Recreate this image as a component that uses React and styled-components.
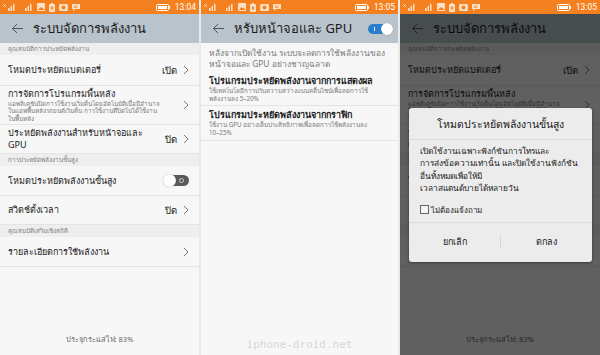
import React from 'react'
import styled, { createGlobalStyle } from 'styled-components'

const Global = createGlobalStyle`
  html, body { margin: 0; padding: 0; background: #e9e9e9; }
  body { font-family: "Noto Sans", "Liberation Sans", sans-serif; }
`;

const Screen = styled.div`
  display: flex;
  gap: 2px;
  width: 600px;
  height: 355px;
  overflow: hidden;
`;

const Phone = styled.div`
  position: relative;
  flex: 0 0 ${p => p.w}px;
  display: flex;
  flex-direction: column;
  background: #f7f7f7;
  overflow: hidden;
`;

const StatusBar = styled.div`
  position: relative;
  z-index: 3;
  height: 14px;
  flex: 0 0 14px;
  background: #f5801f;
  display: flex;
  align-items: center;
  padding: 0 3px 0 3px;
  color: #fff;
  font-size: 8.5px;
`;

const StatusIcons = styled.div`
  display: flex;
  align-items: center;
  gap: 4px;
  flex: 1;
`;

const Time = styled.span`
  margin-left: 5px;
  font-family: "Roboto", sans-serif;
`;

const Header = styled.div`
  height: 29px;
  flex: 0 0 29px;
  background: #b8c3cb;
  display: flex;
  align-items: center;
  padding: 0 6px 0 11px;
  gap: 9px;
`;

const HeaderTitle = styled.div`
  flex: 1;
  font-size: 13px;
  color: #1c1c1c;
  white-space: nowrap;
  overflow: hidden;
`;

const Section = styled.div`
  background: #eeeeee;
  color: #808080;
  font-size: 6.3px;
  height: 12px;
  flex: 0 0 12px;
  padding: 0 8px;
  line-height: 12px;
  white-space: nowrap;
`;

const Row = styled.div`
  display: flex;
  align-items: center;
  height: ${p => p.h || 29}px;
  flex: 0 0 ${p => p.h || 29}px;
  box-sizing: border-box;
  padding: 0 10px 0 8px;
  border-bottom: 1px solid #e4e4e4;
  background: #f7f7f7;
  gap: 6px;
`;

const RowText = styled.div`
  flex: 1;
  min-width: 0;
`;

const RowTitle = styled.div`
  font-size: ${p => p.size || 9}px;
  line-height: ${p => (p.size || 9) + 3}px;
  color: #1a1a1a;
  font-weight: ${p => p.bold ? 600 : 400};
  white-space: nowrap;
`;

const RowSub = styled.div`
  font-size: 6.3px;
  line-height: 7.6px;
  color: #7a7a7a;
  white-space: nowrap;
`;

const Value = styled.span`
  font-size: 9.5px;
  color: #222;
`;

const Spacer = styled.div`
  flex: 1;
`;

const Footer = styled.div`
  text-align: center;
  font-size: 7.5px;
  color: #666;
  padding-bottom: 10px;
`;

const Watermark = styled.div`
  text-align: center;
  font-family: "DejaVu Sans Mono", monospace;
  font-size: 11px;
  color: #d6d6d6;
  padding-bottom: 4px;
`;

const Intro = styled.div`
  font-size: 8.4px;
  line-height: 11px;
  color: #777;
  padding: 4px 8px 3px;
  white-space: nowrap;
`;

const Toggle = styled.div`
  width: ${p => p.w || 25}px;
  height: ${p => p.hh || 11}px;
  border-radius: 8px;
  background: ${p => p.on ? '#2a7ccc' : '#5a5a5a'};
  position: relative;
  flex: 0 0 auto;
  &::after {
    content: '';
    position: absolute;
    top: -1px;
    ${p => p.on ? 'right: -1px;' : 'left: -1px;'}
    width: ${p => (p.hh || 11) + 2}px;
    height: ${p => (p.hh || 11) + 2}px;
    border-radius: 50%;
    background: #fff;
    box-shadow: 0 0 1px rgba(0,0,0,.4);
  }
  &::before {
    content: '';
    position: absolute;
    top: 50%;
    ${p => p.on ? 'left: 6px; width: 1px; height: 4px; margin-top: -2px; background: #fff;' : 'right: 5px; width: 3px; height: 3px; margin-top: -2.5px; border: 1px solid #ccc; border-radius: 50%;'}
  }
`;

const Overlay = styled.div`
  position: absolute;
  z-index: 2;
  top: 14px;
  left: 0;
  right: 0;
  bottom: 0;
  background: rgba(0, 0, 0, 0.61);
`;

const Dialog = styled.div`
  position: absolute;
  z-index: 4;
  top: 108px;
  left: 9px;
  width: 183px;
  height: 154px;
  background: #ececec;
  border-radius: 3px;
  box-shadow: 0 1px 3px rgba(0,0,0,.4);
  display: flex;
  flex-direction: column;
`;

const DialogTitle = styled.div`
  text-align: center;
  font-size: 10.5px;
  line-height: 14px;
  color: #1a1a1a;
  padding: 9px 0 8px;
  border-bottom: 1px solid #dcdcdc;
`;

const DialogBody = styled.div`
  padding: 5px 6px 0 11px;
  font-size: 8.3px;
  line-height: 12.4px;
  color: #1a1a1a;
  white-space: nowrap;
`;

const CheckLine = styled.label`
  display: flex;
  align-items: center;
  gap: 2px;
  font-size: 8px;
  line-height: 11px;
  color: #222;
  padding: 9px 0 7px 11px;
  border-bottom: 1px solid #dcdcdc;
`;

const CheckBox = styled.span`
  width: 7px;
  height: 7px;
  border: 1px solid #666;
  background: #f4f4f4;
`;

const Buttons = styled.div`
  flex: 1;
  display: flex;
  align-items: center;
`;

const DialogButton = styled.div`
  flex: 1;
  text-align: center;
  font-size: 9px;
  line-height: 12px;
  color: #1a1a1a;
  & + & {
    border-left: 1px solid #d6d6d6;
  }
`;

const Chevron = () => (
  <svg width="6" height="10" viewBox="0 0 6 10">
    <path d="M1 1 L5 5 L1 9" fill="none" stroke="#666" strokeWidth="0.9" />
  </svg>
);

const BackArrow = () => (
  <svg width="13" height="11" viewBox="0 0 13 11">
    <path d="M12 5.5 H1.5 M6 1 L1.5 5.5 L6 10" fill="none" stroke="#555" strokeWidth="1" />
  </svg>
);

const Signal = ({ x }) => (
  <svg width="13" height="8" viewBox="0 0 13 8">
    {x && <path d="M0 1 L3 4 M3 1 L0 4" stroke="#fde1c6" strokeWidth="0.8" />}
    <rect x="5" y="5" width="1.5" height="3" fill="#fde1c6" />
    <rect x="7.5" y="3" width="1.5" height="5" fill="#fde1c6" />
    <rect x="10" y="1" width="1.5" height="7" fill="#fde1c6" />
  </svg>
);

const StatusLeft = () => (
  <StatusIcons>
    <Signal x />
    <Signal />
    <svg width="8" height="8" viewBox="0 0 8 8">
      <rect x="0" y="0" width="8" height="8" rx="1" fill="#fde1c6" />
      <path d="M1 7 L3.5 4 L5 5.5 L6 4.5 L7 7 Z" fill="#f5801f" />
    </svg>
    <svg width="6" height="9" viewBox="0 0 6 9">
      <rect x="0" y="1" width="6" height="8" rx="1" fill="#fde1c6" />
      <rect x="2" y="0" width="2" height="1" fill="#fde1c6" />
      <path d="M3 3 V7 M1.5 5 H4.5" stroke="#f5801f" strokeWidth="1" />
    </svg>
    <svg width="9" height="8" viewBox="0 0 9 8">
      <rect x="0" y="1" width="9" height="7" rx="1.5" fill="#fde1c6" />
      <circle cx="4.5" cy="4.5" r="2" fill="#f5801f" />
    </svg>
    <svg width="8" height="8" viewBox="0 0 8 8">
      <path d="M0 1 H8 V6 H3 L1 8 V6 H0 Z" fill="#fde1c6" />
      <path d="M2 3 H6 M2 4.5 H5" stroke="#f5801f" strokeWidth="0.7" />
    </svg>
  </StatusIcons>
);

const Battery = () => (
  <svg width="14" height="7" viewBox="0 0 14 7">
    <rect x="0.5" y="0.5" width="12" height="6" rx="1" fill="none" stroke="#fff" />
    <rect x="2" y="2" width="9" height="3" fill="#fff" />
    <rect x="13" y="2" width="1" height="3" fill="#fff" />
  </svg>
);

const Status = ({ time }) => (
  <StatusBar>
    <StatusLeft />
    <Battery />
    <Time>{time}</Time>
  </StatusBar>
);

const MainList = () => (
  <>
    <Header>
      <BackArrow />
      <HeaderTitle>ระบบจัดการพลังงาน</HeaderTitle>
    </Header>
    <Section>คุณสมบัติการประหยัดพลังงาน</Section>
    <Row h={31}>
      <RowText><RowTitle>โหมดประหยัดแบตเตอรี่</RowTitle></RowText>
      <Value>เปิด</Value>
      <Chevron />
    </Row>
    <Row h={39}>
      <RowText>
        <RowTitle>การจัดการโปรแกรมพื้นหลัง</RowTitle>
        <RowSub>แอพลิเคชันปิดการใช้งานเริ่มต้นโดยอัตโนมัติเมื่อมีอำนาจ</RowSub>
        <RowSub>ในแอพพื้นหลังรถยนต์เริ่มต้น การใช้งานที่ปิดไม่ได้ใช้งาน</RowSub>
        <RowSub>ในพื้นหลัง</RowSub>
      </RowText>
      <Chevron />
    </Row>
    <Row h={29}>
      <RowText>
        <RowTitle>ประหยัดพลังงานสำหรับหน้าจอและ</RowTitle>
        <RowTitle>GPU</RowTitle>
      </RowText>
      <Value>ปิด</Value>
      <Chevron />
    </Row>
    <Section>การประหยัดพลังงานขั้นสูง</Section>
    <Row h={30}>
      <RowText><RowTitle>โหมดประหยัดพลังงานขั้นสูง</RowTitle></RowText>
      <Toggle />
    </Row>
    <Row h={29}>
      <RowText><RowTitle>สวิตช์ตั้งเวลา</RowTitle></RowText>
      <Value>ปิด</Value>
      <Chevron />
    </Row>
    <Section>คุณสมบัติเสริมเชิงสถิติ</Section>
    <Row h={30}>
      <RowText><RowTitle>รายละเอียดการใช้พลังงาน</RowTitle></RowText>
      <Chevron />
    </Row>
    <Spacer />
    <Footer>ประจุกระแสไฟ: 83%</Footer>
  </>
);

const App = () => (
  <>
    <Global />
    <Screen>
      <Phone w={199}>
        <Status time="13:04" />
        <MainList />
      </Phone>
      <Phone w={197}>
        <Status time="13:05" />
        <Header>
          <BackArrow />
          <HeaderTitle>หรับหน้าจอและ GPU</HeaderTitle>
          <Toggle on w={24} hh={10} />
        </Header>
        <Intro>
          หลังจากเปิดใช้งาน ระบบจะลดการใช้พลังงานของ<br />
          หน้าจอและ GPU อย่างชาญฉลาด
        </Intro>
        <Row h={34}>
          <RowText>
            <RowTitle size={9} bold>โปรแกรมประหยัดพลังงานจากการแสดงผล</RowTitle>
            <RowSub>ใช้เทคโนโลยีการปรับความสว่างแบบคลื่นไซน์เพื่อลดการใช้</RowSub>
            <RowSub>พลังงานลง 5–20%</RowSub>
          </RowText>
        </Row>
        <Row h={35}>
          <RowText>
            <RowTitle size={9} bold>โปรแกรมประหยัดพลังงานจากกราฟิก</RowTitle>
            <RowSub>ใช้งาน GPU อย่างเต็มประสิทธิภาพเพื่อลดการใช้พลังงานลง</RowSub>
            <RowSub>10–25%</RowSub>
          </RowText>
        </Row>
        <Spacer />
        <Watermark>iphone-droid.net</Watermark>
      </Phone>
      <Phone w={200}>
        <Status time="13:05" />
        <MainList />
        <Overlay />
        <Dialog>
          <DialogTitle>โหมดประหยัดพลังงานขั้นสูง</DialogTitle>
          <DialogBody>
            เปิดใช้งานเฉพาะฟังก์ชันการโทรและ<br />
            การส่งข้อความเท่านั้น และปิดใช้งานฟังก์ชัน<br />
            อื่นทั้งหมดเพื่อให้มี<br />
            เวลาสแตนด์บายได้หลายวัน
          </DialogBody>
          <CheckLine><CheckBox />ไม่ต้องแจ้งถาม</CheckLine>
          <Buttons>
            <DialogButton>ยกเลิก</DialogButton>
            <DialogButton>ตกลง</DialogButton>
          </Buttons>
        </Dialog>
      </Phone>
    </Screen>
  </>
);

export default App
